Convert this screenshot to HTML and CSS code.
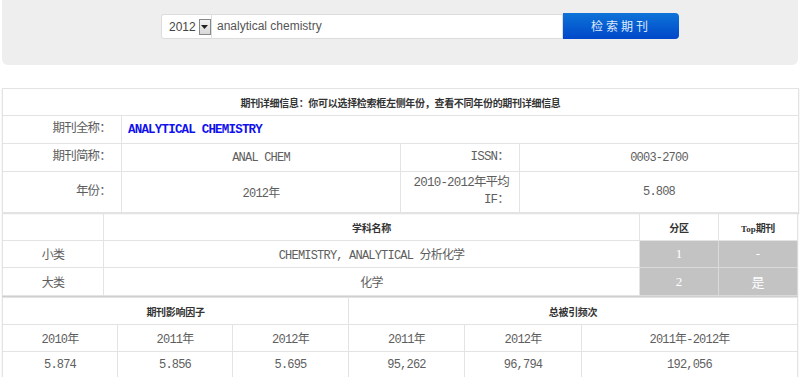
FILE: index.html
```html
<!DOCTYPE html>
<html>
<head>
<meta charset="utf-8">
<link rel="stylesheet" href="styles.css">
</head>
<body>
<div class="page">
  <div class="search-band">
    <div class="search">
      <div class="year-select">
        <span class="year">2012</span>
        <span class="drop"><svg width="7" height="4" viewBox="0 0 7 4"><path d="M0 0h7L3.5 4z" fill="#222"/></svg></span>
      </div>
      <div class="query">analytical chemistry</div>
      <div class="btn">检索期刊</div>
    </div>
  </div>

  <table class="tbl t1">
    <colgroup><col class="c15"><col class="c35"><col class="c15"><col class="c35"></colgroup>
    <tr class="head"><th colspan="4">期刊详细信息：你可以选择检索框左侧年份，查看不同年份的期刊详细信息</th></tr>
    <tr class="r28"><td class="lbl">期刊全称：</td><td colspan="3" class="name">ANALYTICAL CHEMISTRY</td></tr>
    <tr class="r28"><td class="lbl">期刊简称：</td><td class="val">ANAL CHEM</td><td class="lbl">ISSN：</td><td class="val">0003-2700</td></tr>
    <tr class="r41"><td class="lbl">年份：</td><td class="val">2012年</td><td class="lbl">2010-2012年平均<br>IF：</td><td class="val">5.808</td></tr>
  </table>

  <table class="tbl t2">
    <colgroup><col class="w101"><col><col class="w79"><col class="w79"></colgroup>
    <tr class="head"><th></th><th>学科名称</th><th>分区</th><th><span class="top">Top</span>期刊</th></tr>
    <tr class="r27"><td class="val">小类</td><td class="val">CHEMISTRY, ANALYTICAL 分析化学</td><td class="gray">1</td><td class="gray">-</td></tr>
    <tr class="r28"><td class="val">大类</td><td class="val">化学</td><td class="gray">2</td><td class="gray">是</td></tr>
  </table>

  <table class="tbl t3">
    <colgroup><col class="w115"><col class="w115"><col class="w116"><col class="w116"><col class="w117"><col></colgroup>
    <tr class="head"><th colspan="3">期刊影响因子</th><th colspan="3">总被引频次</th></tr>
    <tr class="r27"><td class="val">2010年</td><td class="val">2011年</td><td class="val">2012年</td><td class="val">2011年</td><td class="val">2012年</td><td class="val">2011年-2012年</td></tr>
    <tr class="r27"><td class="val">5.874</td><td class="val">5.856</td><td class="val">5.695</td><td class="val">95,262</td><td class="val">96,794</td><td class="val">192,056</td></tr>
  </table>
</div>
</body>
</html>
```

FILE: styles.css
```css
html, body {
  margin: 0;
  padding: 0;
  background: #fff;
}
.page {
  padding: 0 2px;
  font-family: "Liberation Mono", "Noto Sans CJK SC", monospace;
  color: #5e5e5e;
}
.search-band {
  height: 65px;
  background: #eeeeee;
  border-radius: 0 0 6px 6px;
  box-sizing: border-box;
  padding: 13px 0 0 159px;
}
.search {
  display: flex;
  align-items: stretch;
  height: 26px;
}
.year-select {
  width: 51px;
  box-sizing: border-box;
  background: #fff;
  border: 1px solid #dcdcdc;
  border-radius: 3px 0 0 3px;
  display: flex;
  align-items: center;
  padding-left: 7px;
  gap: 3px;
  margin-top: 1px;
  height: 25px;
}
.year {
  font-family: "Liberation Sans", Arial, sans-serif;
  font-size: 12px;
  color: #444;
}
.drop {
  width: 12px;
  height: 16px;
  border: 1px solid #888;
  background: linear-gradient(#f4f4f4, #d8d8d8);
  display: flex;
  align-items: center;
  justify-content: center;
  box-sizing: border-box;
}
.query {
  width: 351px;
  box-sizing: border-box;
  background: #fff;
  border: 1px solid #dcdcdc;
  border-left: none;
  margin-top: 1px;
  height: 25px;
  padding-left: 5px;
  font-family: "Liberation Sans", Arial, sans-serif;
  font-size: 12px;
  color: #555;
  line-height: 23px;
}
.btn {
  width: 116px;
  box-sizing: border-box;
  background: linear-gradient(#0d74d8, #0047c9);
  border-radius: 0 4px 4px 0;
  color: #dfe9fb;
  font-family: "Noto Sans CJK SC", sans-serif;
  font-size: 12px;
  letter-spacing: 3px;
  text-align: center;
  line-height: 26px;
}

.tbl {
  width: 796px;
  border-collapse: collapse;
  table-layout: fixed;
  border: 1px solid #dedede;
  box-shadow: 0 1px 1px #cfcfcf;
}
.t1 { margin-top: 23px; }
.t3 { margin-top: 1px; }
.tbl td, .tbl th {
  border: 1px solid #e3e3e3;
  padding: 0;
  font-size: 12px;
  letter-spacing: -0.8px;
}
.c15 { width: 119px; }
.c35 { width: 279px; }
.w101 { width: 101px; }
.w79 { width: 79px; }
.w115 { width: 115px; }
.w116 { width: 116px; }
.w117 { width: 117px; }

.head th {
  height: 26px;
  font-family: "Noto Sans CJK SC", sans-serif;
  font-size: 10px;
  letter-spacing: -0.3px;
  font-weight: bold;
  color: #333;
  text-align: center;
}
.top {
  font-family: "Liberation Serif", serif;
  font-size: 9px;
  letter-spacing: 0;
}
.r27 td { height: 26px; }
.r28 td { height: 27px; }
.r41 td { height: 40px; }
.lbl {
  text-align: right;
  padding-right: 10px !important;
  font-size: 12.5px !important;
  line-height: 17px;
}
.val {
  text-align: center;
}
.name {
  color: #1010ee;
  font-weight: bold;
  font-size: 12.5px !important;
  padding-left: 6px !important;
}
.gray {
  background: #c3c3c3;
  color: #fff;
  text-align: center;
  border-color: #dadada !important;
  font-family: "Liberation Serif", "Noto Sans CJK SC", serif;
  font-size: 13px !important;
  letter-spacing: 0 !important;
}
```
